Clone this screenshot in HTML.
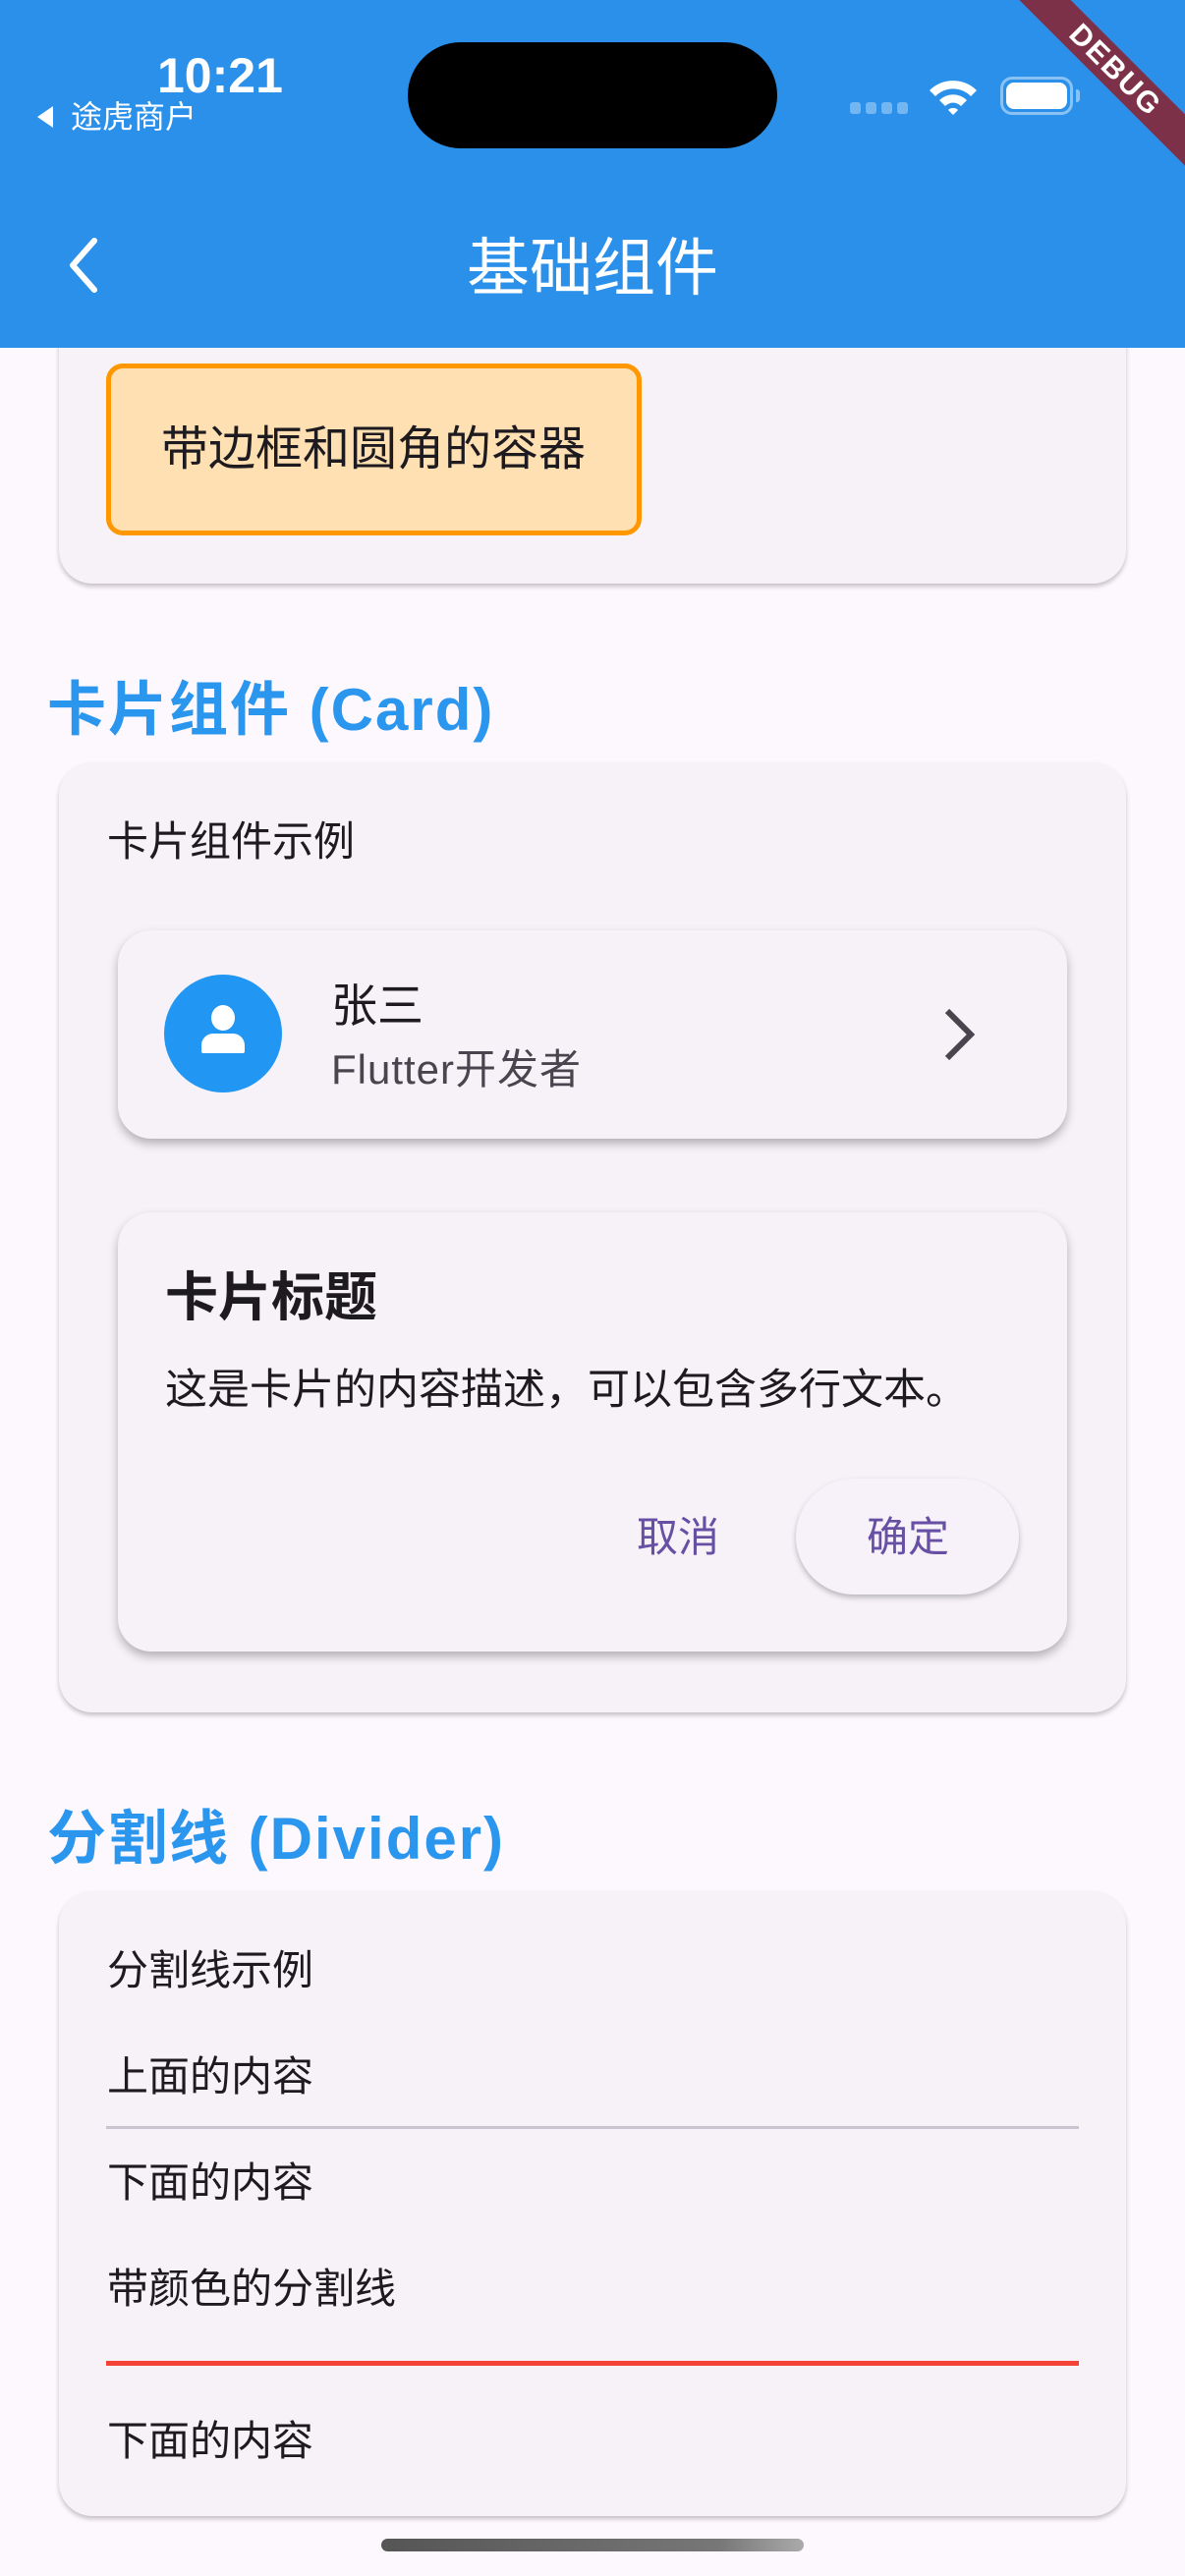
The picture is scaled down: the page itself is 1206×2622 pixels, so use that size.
<!DOCTYPE html>
<html><head><meta charset="utf-8"><style>
*{margin:0;padding:0;box-sizing:border-box}
body{width:1206px;height:2622px;background:#fdf7fe;position:relative;overflow:hidden;font-family:"Liberation Sans","Noto Sans CJK SC",sans-serif;color:#1d1b20}
.a{position:absolute}
.t{position:absolute;white-space:nowrap;line-height:1}
.card{position:absolute;background:#f6f2f8;border-radius:34px;box-shadow:0 3px 5px rgba(0,0,0,.22)}
.ic{position:absolute;background:#f6f2f8;border-radius:34px;box-shadow:0 5px 10px rgba(0,0,0,.28)}
.h{font-weight:bold;color:#2a96ee;font-size:60px;letter-spacing:2px}
</style></head><body>
<div class="card" style="left:60px;top:300px;width:1086px;height:294px;border-radius:0 0 34px 34px"></div>
<div class="a" style="left:108px;top:370px;width:545px;height:175px;background:#ffe0b2;border:5px solid #ff9800;border-radius:17px"></div>
<div class="t" style="left:164px;top:434px;font-size:48px">带边框和圆角的容器</div>

<div class="a" style="left:0;top:0;width:1206px;height:354px;background:#2a90ea"></div>
<div class="a" style="left:415px;top:43px;width:376px;height:108px;background:#000;border-radius:54px"></div>
<div class="t" style="left:160px;top:52px;font-size:50px;font-weight:bold;color:#fff">10:21</div>
<div class="a" style="left:38px;top:108px;width:0;height:0;border-top:11px solid transparent;border-bottom:11px solid transparent;border-right:16px solid #fff"></div>
<div class="t" style="left:72px;top:103px;font-size:32px;color:#fff">途虎商户</div>
<div class="a" style="left:865px;top:104px;width:11px;height:12px;border-radius:3px;background:rgba(255,255,255,.35)"></div>
<div class="a" style="left:881px;top:104px;width:11px;height:12px;border-radius:3px;background:rgba(255,255,255,.35)"></div>
<div class="a" style="left:897px;top:104px;width:11px;height:12px;border-radius:3px;background:rgba(255,255,255,.35)"></div>
<div class="a" style="left:913px;top:104px;width:11px;height:12px;border-radius:3px;background:rgba(255,255,255,.35)"></div>
<svg class="a" style="left:944px;top:78px" width="52" height="40" viewBox="0 0 52 40"><path d="M2 14 A34 34 0 0 1 50 14 L44 20 A25 25 0 0 0 8 20Z" fill="#fff"/><path d="M12 24 A20 20 0 0 1 40 24 L34 30 A11 11 0 0 0 18 30Z" fill="#fff"/><path d="M21 34 L26 39 L31 34 A7 7 0 0 0 21 34Z" fill="#fff"/></svg>
<div class="a" style="left:1018px;top:78px;width:74px;height:39px;border:3px solid rgba(255,255,255,.45);border-radius:12px"></div>
<div class="a" style="left:1024px;top:84px;width:62px;height:27px;background:#fff;border-radius:8px"></div>
<div class="a" style="left:1095px;top:91px;width:4px;height:13px;background:rgba(255,255,255,.45);border-radius:0 3px 3px 0"></div>
<div class="a" style="left:985px;top:53px;width:300px;height:37px;background:#7c3149;transform:rotate(45deg);transform-origin:center;color:#fff;font-weight:bold;font-size:30px;text-align:center;line-height:37px;letter-spacing:2px">DEBUG</div>
<svg class="a" style="left:62px;top:240px" width="44" height="60" viewBox="0 0 44 60"><path d="M34 5 L12 30 L34 55" stroke="#fff" stroke-width="6" fill="none" stroke-linecap="round" stroke-linejoin="round"/></svg>
<div class="t" style="left:0;width:1206px;text-align:center;top:241px;font-size:64px;color:#fff">基础组件</div>

<div class="t h" style="left:48px;top:693px">卡片组件 (Card)</div>
<div class="card" style="left:60px;top:776px;width:1086px;height:967px"></div>
<div class="t" style="left:109px;top:836px;font-size:42px">卡片组件示例</div>
<div class="ic" style="left:120px;top:947px;width:966px;height:212px"></div>
<div class="a" style="left:167px;top:992px;width:120px;height:120px;border-radius:50%;background:#2196f3"></div>
<div class="a" style="left:215px;top:1023px;width:24px;height:26px;border-radius:50%;background:#fff"></div>
<div class="a" style="left:205px;top:1052px;width:44px;height:20px;border-radius:12px 12px 2px 2px;background:#fff"></div>
<div class="t" style="left:337px;top:1000px;font-size:47px">张三</div>
<div class="t" style="left:337px;top:1068px;font-size:42px;letter-spacing:1px;color:#49454f">Flutter开发者</div>
<svg class="a" style="left:955px;top:1024px" width="48" height="58" viewBox="0 0 48 58"><path d="M9 5 L33 29 L9 53" stroke="#49454f" stroke-width="6" fill="none"/></svg>
<div class="ic" style="left:120px;top:1234px;width:966px;height:447px"></div>
<div class="t" style="left:168px;top:1294px;font-size:54px;font-weight:bold">卡片标题</div>
<div class="t" style="left:168px;top:1394px;font-size:43px">这是卡片的内容描述，可以包含多行文本。</div>
<div class="t" style="left:648px;top:1544px;font-size:42px;color:#6750a4">取消</div>
<div class="a" style="left:810px;top:1505px;width:227px;height:118px;border-radius:59px;background:#f7f2fa;box-shadow:0 3px 6px rgba(0,0,0,.25)"></div>
<div class="t" style="left:882px;top:1544px;font-size:42px;color:#6750a4">确定</div>

<div class="t h" style="left:48px;top:1842px">分割线 (Divider)</div>
<div class="card" style="left:60px;top:1925px;width:1086px;height:636px"></div>
<div class="t" style="left:109px;top:1985px;font-size:42px">分割线示例</div>
<div class="t" style="left:109px;top:2093px;font-size:42px">上面的内容</div>
<div class="a" style="left:108px;top:2164px;width:990px;height:3px;background:#cac4d0"></div>
<div class="t" style="left:109px;top:2201px;font-size:42px">下面的内容</div>
<div class="t" style="left:109px;top:2309px;font-size:42px">带颜色的分割线</div>
<div class="a" style="left:108px;top:2403px;width:990px;height:5px;background:#f44336"></div>
<div class="t" style="left:109px;top:2464px;font-size:42px">下面的内容</div>
<div class="a" style="left:388px;top:2584px;width:430px;height:13px;border-radius:7px;background:linear-gradient(90deg,#555,#777 80%,#aaa)"></div>
</body></html>
